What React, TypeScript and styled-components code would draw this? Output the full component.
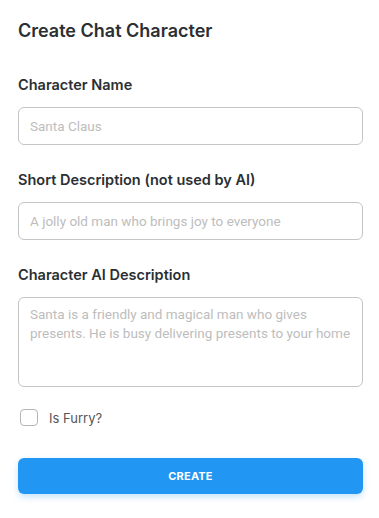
import React from "react";
import styled, { createGlobalStyle } from "styled-components";

const Global = createGlobalStyle`
  html, body { margin: 0; padding: 0; background: #ffffff; }
  body { font-family: Inter, "Noto Sans", sans-serif; color: #2b2f33; }
  * { box-sizing: border-box; }
`;

const Page = styled.div`
  padding: 17px 16px 24px 18px;
  display: flex;
  flex-direction: column;
`;

const Title = styled.h1`
  margin: 0;
  font-size: 18px;
  line-height: 27px;
  font-weight: 600;
  color: #2b2f33;
`;

const Form = styled.form`
  display: flex;
  flex-direction: column;
  margin-top: 30px;
`;

const Field = styled.div<{ $first?: boolean }>`
  display: flex;
  flex-direction: column;
  margin-top: ${(p) => (p.$first ? "0" : "24px")};
`;

const Label = styled.label`
  font-size: 14.5px;
  line-height: 22px;
  font-weight: 600;
  color: #2b2f33;
  margin-bottom: 11px;
`;

const Input = styled.input`
  width: 100%;
  height: 38px;
  border: 1px solid #c4c4c4;
  border-radius: 6px;
  padding: 0 11px;
  font-family: Roboto, "Noto Sans", sans-serif;
  font-size: 13.5px;
  color: #333;
  outline: none;
  &::placeholder { color: #bdbdbd; }
`;

const TextArea = styled.textarea`
  width: 100%;
  height: 90px;
  border: 1px solid #c4c4c4;
  border-radius: 6px;
  padding: 7px 4px 7px 11px;
  font-family: Roboto, "Noto Sans", sans-serif;
  font-size: 13.5px;
  line-height: 19px;
  color: #333;
  resize: none;
  outline: none;
  &::placeholder { color: #bdbdbd; }
`;

const CheckRow = styled.label`
  display: flex;
  align-items: center;
  gap: 11px;
  margin-top: 22px;
  padding-left: 2px;
  font-size: 13px;
  color: #555;
  cursor: pointer;
`;

const Box = styled.span`
  width: 18px;
  height: 17px;
  border: 1px solid #b5b5b5;
  border-radius: 4px;
  background: #fff;
`;

const Button = styled.button`
  margin-top: 32px;
  height: 36px;
  width: 100%;
  border: none;
  border-radius: 6px;
  background: #2196f3;
  color: #fff;
  font-family: Inter, "Noto Sans", sans-serif;
  font-size: 11px;
  font-weight: 700;
  letter-spacing: 0.2px;
  box-shadow: 0 3px 6px rgba(33, 150, 243, 0.25);
  cursor: pointer;
`;

export default function App() {
  return (
    <>
      <Global />
      <Page>
        <Title>Create Chat Character</Title>
        <Form onSubmit={(e) => e.preventDefault()}>
          <Field $first>
            <Label>Character Name</Label>
            <Input placeholder="Santa Claus" />
          </Field>
          <Field>
            <Label>Short Description (not used by AI)</Label>
            <Input placeholder="A jolly old man who brings joy to everyone" />
          </Field>
          <Field>
            <Label>Character AI Description</Label>
            <TextArea placeholder="Santa is a friendly and magical man who gives presents. He is busy delivering presents to your home" />
          </Field>
          <CheckRow>
            <Box />
            Is Furry?
          </CheckRow>
          <Button type="submit">CREATE</Button>
        </Form>
      </Page>
    </>
  );
}
